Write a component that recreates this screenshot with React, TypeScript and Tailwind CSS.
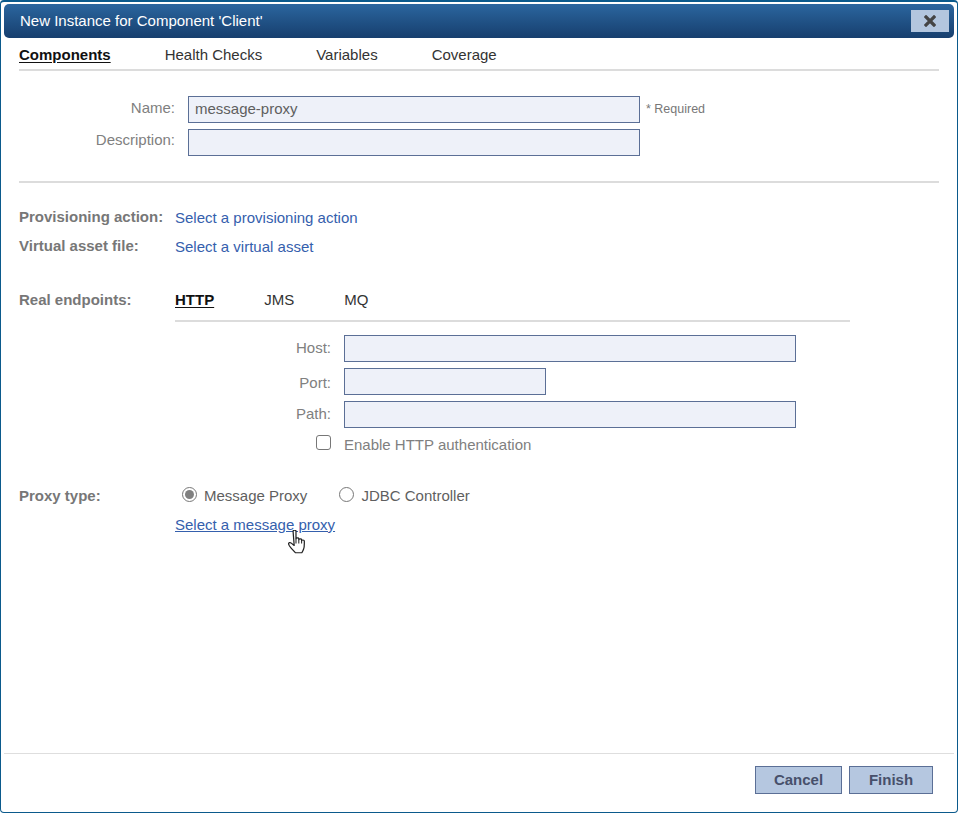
const font = "[font-family:'Liberation_Sans',Arial,sans-serif]";

function Field({ label, width, value, labelClass = '' }: { label: string; width: string; value?: string; labelClass?: string }) {
  return (
    <div className="flex items-center">
      <div className={`w-[169px] pr-[13px] text-right text-[15px] text-[#808080] ${labelClass}`}>{label}</div>
      <div className={`${width} h-[27px] border border-[#5b6f96] bg-[#eef1f9] pl-[6px] text-[15px] leading-[24px] text-[#5f5f5f]`}>
        {value}
      </div>
    </div>
  );
}

function EndpointField({ label, width, labelClass = '' }: { label: string; width: string; labelClass?: string }) {
  return (
    <div className="flex items-center">
      <div className={`w-[156px] pr-[13px] text-right text-[15px] text-[#808080] ${labelClass}`}>{label}</div>
      <div className={`${width} h-[27px] border border-[#5b6f96] bg-[#eef1f9]`} />
    </div>
  );
}

function HandCursor() {
  return (
    <svg className="absolute left-[288px] top-[530px]" width="18" height="24" viewBox="1 1 16 24" preserveAspectRatio="none">
      <path
        d="M5.5 2.2c0-1.5 2.6-1.5 2.6 0v7.6c0-1.2 2.5-1.2 2.5 0v1c0-1.2 2.5-1.2 2.5 0v1c0-1.1 2.4-1.1 2.4.2 0 3.3.2 6-.6 8-.5 1.5-1 2.7-1.6 3.8H7.6c-1-1.6-2.5-3-3.8-4.6-.8-1-2.3-3.3-2.3-4.4 0-1.3 1.4-1.6 2.4-.7l2.6 2.4z"
        fill="#fff"
        stroke="#222"
        strokeWidth="1.1"
        strokeLinejoin="round"
      />
      <path d="M8.1 9.8v4.7M10.6 10.8v3.7M13.1 11.8v2.7" stroke="#222" strokeWidth="0.9" fill="none" />
    </svg>
  );
}

export default function App() {
  return (
    <div className={`${font} relative h-[813px] w-[958px] overflow-hidden bg-white`}>
      <div className="flex h-full flex-col rounded-[4px] border border-t-2 border-[#0b5a8c] p-[3px] pt-[2px]">
        {/* title bar */}
        <div className="flex h-[34px] shrink-0 items-center justify-between rounded-[5px] bg-gradient-to-b from-[#2b669f] to-[#173f6e] pl-[16px] pr-[5px]">
          <span className="text-[15px] text-white">New Instance for Component 'Client'</span>
          <button className="flex h-[22px] w-[38px] items-center justify-center bg-[#b3c6de]">
            <svg width="12" height="12" viewBox="0 0 12 12">
              <path d="M2 2l8 8M10 2l-8 8" stroke="#444" strokeWidth="3.2" strokeLinecap="square" />
            </svg>
          </button>
        </div>

        <div className="flex flex-1 flex-col px-[15px]">
          {/* tabs */}
          <div className="flex h-[33px] shrink-0 items-center gap-[54px] border-b-2 border-[#dcdcdc] pt-[4px] text-[15px] text-[#333]">
            <span className="font-bold text-[#111] underline underline-offset-2">Components</span>
            <span>Health Checks</span>
            <span>Variables</span>
            <span>Coverage</span>
          </div>

          {/* name + description */}
          <div className="mt-[25px] flex flex-col gap-[6px] border-b-2 border-[#dcdcdc] pb-[25px]">
            <div className="relative">
              <Field label="Name:" width="w-[452px]" value="message-proxy" labelClass="pb-[2px]" />
              <span className="absolute left-[627px] top-[4px] text-[12.5px] text-[#777]">* Required</span>
            </div>
            <Field label="Description:" width="w-[452px]" labelClass="pb-[4px]" />
          </div>

          {/* provisioning */}
          <div className="mt-[26px] flex flex-col gap-[11px] text-[15px]">
            <div className="flex h-[18px] items-center">
              <span className="mb-[2px] w-[156px] font-bold text-[#777]">Provisioning action:</span>
              <a className="text-[#3560ad]">Select a provisioning action</a>
            </div>
            <div className="flex h-[18px] items-center">
              <span className="mb-[2px] w-[156px] font-bold text-[#777]">Virtual asset file:</span>
              <a className="text-[#3560ad]">Select a virtual asset</a>
            </div>
          </div>

          {/* real endpoints */}
          <div className="mt-[32px] flex">
            <span className="w-[156px] pt-[1px] text-[15px] font-bold text-[#777]">Real endpoints:</span>
            <div className="w-[675px]">
              <div className="flex h-[34px] items-start gap-[50px] border-b-2 border-[#dcdcdc] pt-[1px] text-[15px] text-[#333]">
                <span className="font-bold text-[#111] underline underline-offset-2">HTTP</span>
                <span>JMS</span>
                <span>MQ</span>
              </div>
              <div className="ml-[13px] mt-[13px] flex flex-col gap-[6px]">
                <EndpointField label="Host:" width="w-[452px]" />
                <EndpointField label="Port:" width="w-[202px]" labelClass="pt-[3px]" />
                <EndpointField label="Path:" width="w-[452px]" />
              </div>
            </div>
          </div>
          <div className="ml-[297px] mt-[7px] flex h-[20px] items-center text-[15px] text-[#808080]">
            <span className="mb-[5px] mr-[13px] h-[15px] w-[15px] rounded-[3px] border border-[#777] bg-white" />
            Enable HTTP authentication
          </div>

          {/* proxy type */}
          <div className="mt-[30px] flex">
            <span className="w-[156px] text-[15px] font-bold text-[#777]">Proxy type:</span>
            <div>
              <div className="flex h-[18px] items-center pl-[7px] pt-[4px] text-[15px] text-[#5f5f5f]">
                <span className="mb-[3px] mr-[7px] flex h-[15px] w-[15px] items-center justify-center rounded-full border border-[#777]">
                  <span className="h-[9px] w-[9px] rounded-full bg-[#808080]" />
                </span>
                Message Proxy
                <span className="mb-[3px] ml-[32px] mr-[7px] h-[15px] w-[15px] rounded-full border border-[#777]" />
                JDBC Controller
              </div>
              <a className="mt-[11px] block text-[15px] text-[#3560ad] underline">Select a message proxy</a>
            </div>
          </div>
        </div>

        {/* footer */}
        <div className="flex h-[56px] shrink-0 items-start justify-end gap-[7px] border-t border-[#dedede] pr-[21px] pt-[12px]">
          <button className="h-[28px] w-[87px] border border-[#5b6f96] bg-[#b5c7e0] text-[15px] font-bold text-[#47506b]">Cancel</button>
          <button className="h-[28px] w-[84px] border border-[#5b6f96] bg-[#b5c7e0] text-[15px] font-bold text-[#47506b]">Finish</button>
        </div>
      </div>
      <HandCursor />
    </div>
  );
}
